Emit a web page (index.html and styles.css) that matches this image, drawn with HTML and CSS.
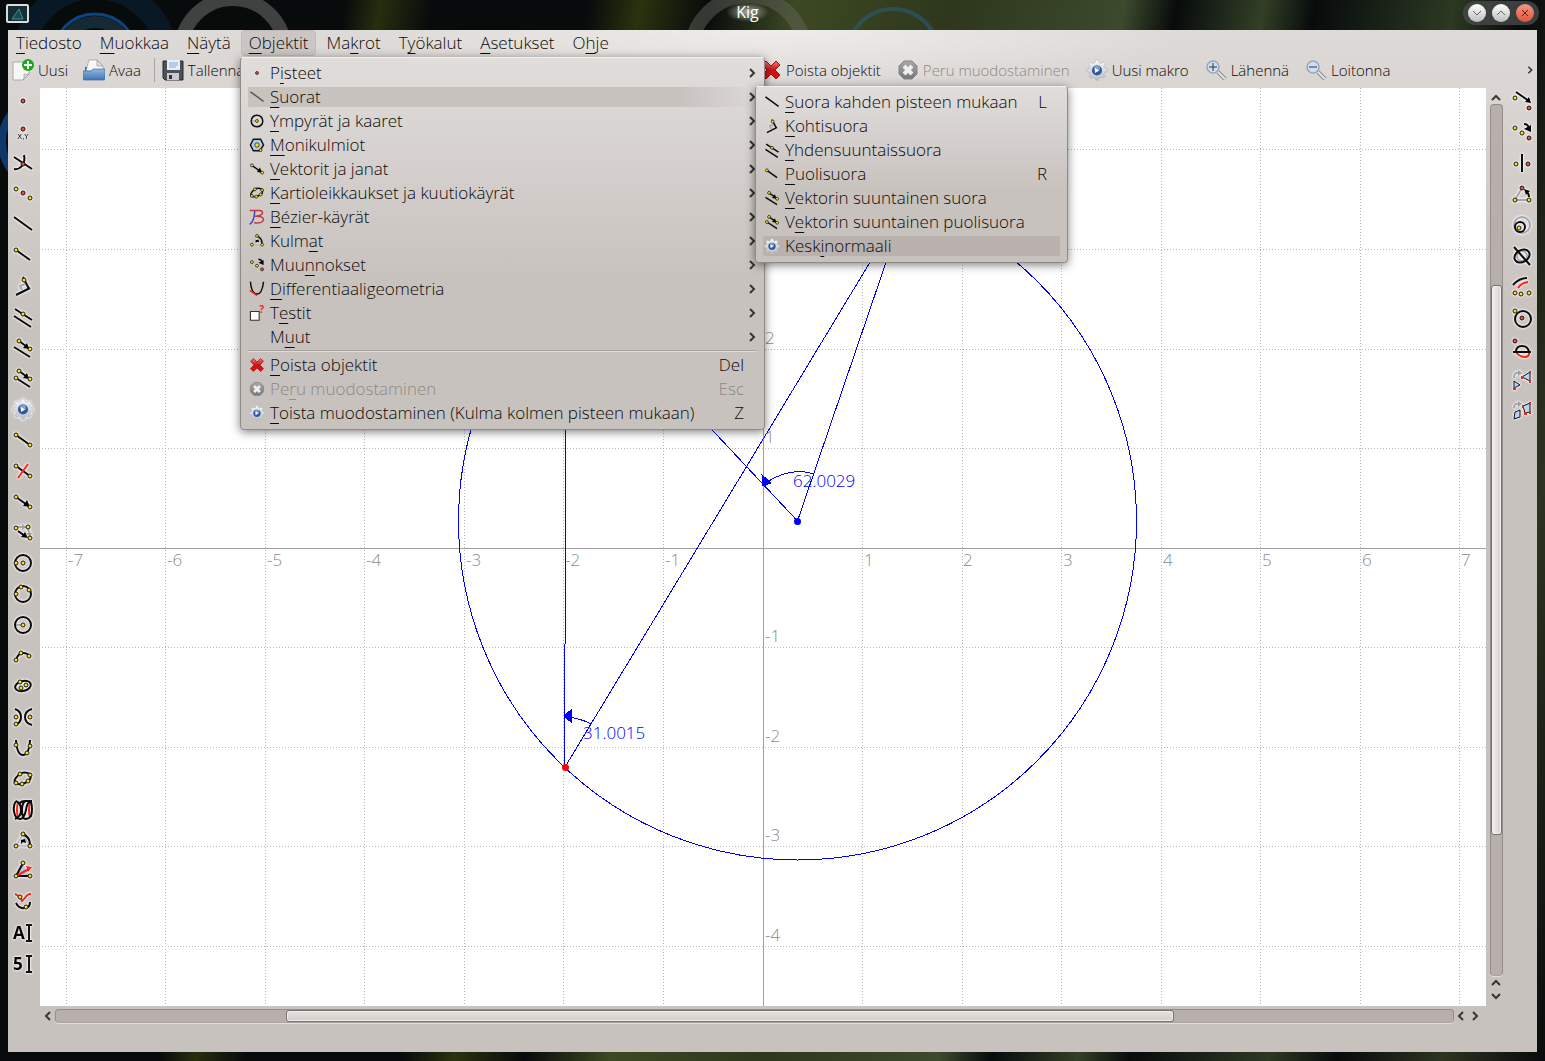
FILE: index.html
```
<!DOCTYPE html>
<html lang="fi">
<head>
    <meta charset="UTF-8">
    <meta name="viewport" content="width=device-width, initial-scale=1.0">
    <title>Kig</title>
    <link rel="stylesheet" href="styles.css">
</head>
<body>
    <!-- Icon library -->
    <svg class="library" width="0" height="0" aria-hidden="true">
        <defs>
            <linearGradient id="steel" x1="0" y1="0" x2="0" y2="1"><stop offset="0" stop-color="#fafafa"/><stop offset="1" stop-color="#b9bcc0"/></linearGradient>
            <linearGradient id="blue" x1="0" y1="0" x2="0" y2="1"><stop offset="0" stop-color="#8fb7e2"/><stop offset="1" stop-color="#3f75b5"/></linearGradient>
            <linearGradient id="grey" x1="0" y1="0" x2="0" y2="1"><stop offset="0" stop-color="#a8a8a8"/><stop offset="1" stop-color="#777"/></linearGradient>
            <linearGradient id="red" x1="0" y1="0" x2="0" y2="1"><stop offset="0" stop-color="#ee7a74"/><stop offset=".5" stop-color="#c81414"/><stop offset="1" stop-color="#e01010"/></linearGradient>
        </defs>
        <symbol id="point" viewBox="0 0 22 22"><circle class="r" cx="11" cy="11" r="2"/></symbol>
        <symbol id="intersection" viewBox="0 0 22 22"><path class="k" d="M2 5 20 17M2 17C8 18 14 12 12 3"/><circle class="r" cx="11" cy="12" r="2"/></symbol>
        <symbol id="midpoint" viewBox="0 0 22 22"><circle class="y" cx="4" cy="7" r="2"/><circle class="r" cx="11" cy="11" r="2"/><circle class="y" cx="18" cy="16" r="2"/></symbol>
        <symbol id="line" viewBox="0 0 22 22"><path class="k" d="M2 4 20 17"/></symbol>
        <symbol id="ray" viewBox="0 0 22 22"><path class="k" d="M4 6 18 16"/><circle class="y" cx="4" cy="6" r="2"/></symbol>
        <symbol id="perpendicular" viewBox="0 0 22 22"><path class="g" d="M10 15 8 11 13 9"/><path class="k" d="M4 20 18 13M11 2 17 14"/><circle class="y" cx="12" cy="5" r="2"/></symbol>
        <symbol id="parallel" viewBox="0 0 22 22"><path class="k" d="M3 3 20 14M2 10 19 21"/><circle class="y" cx="11" cy="8" r="2"/></symbol>
        <symbol id="vector-line" viewBox="0 0 22 22"><path class="k" d="M7 4 18 12M2 10 18 20"/><path d="M11 11 15 6 17 12Z"/><circle class="y" cx="7" cy="4" r="2"/><circle class="y" cx="18" cy="12" r="2"/></symbol>
        <symbol id="vector-ray" viewBox="0 0 22 22"><path class="k" d="M7 4 18 12M4 11 18 20"/><path d="M11 11 15 6 17 12Z"/><circle class="y" cx="7" cy="4" r="2"/><circle class="y" cx="18" cy="12" r="2"/><circle class="y" cx="4" cy="11" r="2"/></symbol>
        <symbol id="gear" viewBox="0 0 22 22">
            <path fill="url(#steel)" stroke="#b4b7bb" stroke-width=".6" d="M9.500 1h3l.6 2.600 1.900.8L17.300 3l2 2.100-1.400 2.200.8 1.900 2.600.6v3l-2.600.6-.8 1.900 1.400 2.200-2 2.100-2.300-1.400-1.900.8-.6 2.300h-3l-.6-2.300-1.900-.8L4.700 19.600l-2-2.100 1.400-2.200-.8-1.900L.7 12.800v-3l2.600-.6.8-1.900L2.700 5.100 4.700 3 7 4.400l1.900-.8Z"/>
            <circle cx="11" cy="11.500" r="6" fill="#c9d5e6"/><circle cx="11" cy="11.500" r="5" fill="#31599a"/><circle cx="11" cy="9.500" r="3" fill="#7f9fcb"/><path fill="#fff" d="M9 9 13 11.500 9 14Z"/>
        </symbol>
        <symbol id="segment" viewBox="0 0 22 22"><path class="k" d="M4 6 18 16"/><circle class="y" cx="4" cy="6" r="2"/><circle class="y" cx="18" cy="16" r="2"/></symbol>
        <symbol id="bisector" viewBox="0 0 22 22"><path class="k" d="M4 6 18 16"/><path class="e" d="M6 18 16 4"/><circle class="y" cx="4" cy="6" r="2"/><circle class="y" cx="18" cy="16" r="2"/></symbol>
        <symbol id="vector" viewBox="0 0 22 22"><path class="k" d="M4 6 18 16"/><path d="M11 15 15 9 18 16Z"/><circle class="y" cx="4" cy="6" r="2"/><circle class="y" cx="18" cy="16" r="2"/></symbol>
        <symbol id="vector-sum" viewBox="0 0 22 22"><path class="g" d="M5 6H14M16 7 18 15"/><path fill="#9a9fa8" d="M10 3 14 6 10 9ZM14 12H20L18 16Z"/><path class="k" d="M6 10 13 15"/><path d="M9 16 13 11 16 17Z"/><circle class="y" cx="4" cy="7" r="2"/><circle class="y" cx="16" cy="6" r="2"/><circle class="y" cx="18" cy="17" r="2"/></symbol>
        <symbol id="circle-through" viewBox="0 0 22 22"><circle class="k" cx="11" cy="11" r="8"/><circle class="y" cx="11" cy="11" r="2"/><circle class="y" cx="4" cy="11" r="2"/></symbol>
        <symbol id="circle-three" viewBox="0 0 22 22"><circle class="k" cx="11" cy="11" r="8"/><circle class="y" cx="4" cy="11" r="2"/><circle class="y" cx="9" cy="4" r="2"/><circle class="y" cx="17" cy="7" r="2"/></symbol>
        <symbol id="circle-radius" viewBox="0 0 22 22"><circle class="k" cx="11" cy="11" r="8"/><path class="g" d="M4 11H9"/><circle class="y" cx="11" cy="11" r="2"/></symbol>
        <symbol id="arc" viewBox="0 0 22 22"><path class="k" d="M4 15Q6 8 11 8 16 8 18 12"/><circle class="y" cx="4" cy="15" r="2"/><circle class="y" cx="9" cy="8" r="2"/><circle class="y" cx="17" cy="11" r="2"/></symbol>
        <symbol id="ellipse" viewBox="0 0 22 22"><ellipse class="k" cx="11" cy="11" rx="8" ry="5" transform="rotate(-15 11 11)"/><circle class="y" cx="8" cy="7" r="2"/><circle class="y" cx="14" cy="10" r="2"/><circle class="y" cx="9" cy="13" r="2"/></symbol>
        <symbol id="hyperbola" viewBox="0 0 22 22"><path class="k" d="M3 3Q9 5 9 11 9 17 3 19M20 3Q13 5 13 11 13 17 20 19"/><circle class="y" cx="4" cy="11" r="2"/><circle class="y" cx="18" cy="11" r="2"/><circle class="y" cx="4" cy="18" r="2"/></symbol>
        <symbol id="parabola" viewBox="0 0 22 22"><path class="k" d="M4 3Q5 18 11 18 17 18 18 3"/><circle class="y" cx="4" cy="8" r="2"/><circle class="y" cx="18" cy="9" r="2"/><circle class="y" cx="15" cy="16" r="2"/></symbol>
        <symbol id="cubic" viewBox="0 0 22 22"><path class="k" d="M3 15Q1 11 8 6 12 3 18 6 20 11 16 13 12 16 10 16 6 17 3 15Z"/><circle class="y" cx="8" cy="6" r="2"/><circle class="y" cx="18" cy="7" r="2"/><circle class="y" cx="16" cy="13" r="2"/><circle class="y" cx="10" cy="16" r="2"/><circle class="y" cx="4" cy="15" r="2"/></symbol>
        <symbol id="locus" viewBox="0 0 22 22"><path class="e" stroke-width="3" d="M6 3Q4 11 6 19M18 3Q16 11 18 19"/><path class="k" d="M4 2Q9 4 9 11 9 18 3 20M4 2Q1 6 2 12 3 20 8 20 12 20 14 11 15 3 19 2M7 5Q9 2 13 2H20M13 20Q10 19 10 11 10 3 14 2M19 3Q21 10 19 17 17 20 13 20"/></symbol>
        <symbol id="angle" viewBox="0 0 22 22"><path fill="#d9dce2" stroke="#9fa4ac" d="M4 16 11 4 18 16Z"/><path class="k" d="M11 4Q18 7 18 15"/><path d="M9 10 13 9 14 13 11 12 9 14Z"/><circle class="y" cx="11" cy="4" r="2"/><circle class="y" cx="4" cy="16" r="2"/><circle class="y" cx="18" cy="16" r="2"/></symbol>
        <symbol id="angle-bisector" viewBox="0 0 22 22"><path fill="#b9c8dc" d="M4 16 11 4 18 16Z"/><path class="k" d="M11 3 4 16H18"/><path class="e" d="M4 16 17 9"/><path fill="#ff2318" d="M14 6 20 7 16 12Z"/><circle class="y" cx="11" cy="3" r="2"/><circle class="y" cx="4" cy="16" r="2"/><circle class="y" cx="18" cy="16" r="2"/></symbol>
        <symbol id="conic-arc" viewBox="0 0 22 22"><path class="e" d="M3 3Q8 5 10 10L13 7Q15 3 19 3"/><path class="k" d="M4 12Q7 18 13 17 18 17 18 11"/><circle class="y" cx="8" cy="6" r="2"/><circle class="y" cx="14" cy="16" r="2"/></symbol>

        <symbol id="translate" viewBox="0 0 22 22"><path class="k" d="M5 2 18 11"/><path d="M14 12 18 7 20 13Z"/><circle class="y" cx="4" cy="8" r="2"/><circle class="r" cx="18" cy="18" r="2"/></symbol>
        <symbol id="reflect-point" viewBox="0 0 22 22"><path class="k" d="M13 3Q17 3 18 7"/><path d="M13 8 20 4 20 11Z"/><circle class="y" cx="4" cy="7" r="2"/><circle class="y" cx="11" cy="12" r="2"/><circle class="r" cx="18" cy="17" r="2"/></symbol>
        <symbol id="reflect-line" viewBox="0 0 22 22"><path class="k" d="M11 2V20"/><circle class="y" cx="5" cy="12" r="2"/><circle class="r" cx="17" cy="12" r="2"/></symbol>
        <symbol id="rotate" viewBox="0 0 22 22"><path class="g" d="M11 5 4 17H18"/><path class="k" d="M18 14Q18 11 16 9"/><path d="M13 6 19 8 15 12Z"/><circle class="r" cx="11" cy="5" r="2"/><circle class="y" cx="4" cy="17" r="2"/><circle class="y" cx="18" cy="17" r="2"/></symbol>
        <symbol id="scale" viewBox="0 0 22 22"><circle class="g" cx="11" cy="11" r="8"/><circle class="k" cx="9" cy="13" r="5"/><circle class="y" cx="8" cy="14" r="2"/></symbol>
        <symbol id="stretch" viewBox="0 0 22 22"><circle class="g" cx="11" cy="11" r="5"/><ellipse class="k" cx="11" cy="11" rx="8" ry="6" transform="rotate(-30 11 11)"/><path class="k" d="M3 2 19 20"/></symbol>
        <symbol id="harmonic" viewBox="0 0 22 22"><path class="k" d="M2 9Q8 2 16 2"/><path class="e" d="M7 12Q10 7 17 6"/><circle class="y" cx="4" cy="17" r="2"/><circle class="y" cx="10" cy="18" r="2"/><circle class="y" cx="18" cy="17" r="2"/></symbol>
        <symbol id="inversion" viewBox="0 0 22 22"><circle class="k" cx="12" cy="12" r="8"/><circle class="y" cx="4" cy="4" r="2"/><circle class="r" cx="11" cy="11" r="2"/></symbol>
        <symbol id="shadow" viewBox="0 0 22 22"><path class="e" d="M5 14Q8 19 15 19 19 18 18 13"/><path class="k" d="M5 14Q5 8 11 8 17 8 18 14M2 14H20"/><circle class="r" cx="4" cy="3" r="2"/></symbol>
        <symbol id="similar" viewBox="0 0 22 22"><path class="g" d="M3 9Q3 3 8 4"/><path fill="#9a9fa8" d="M7 1 11 4 7 7Z"/><path class="t" d="M3 12V19L9 16ZM11 8 19 3V12Z"/><path class="m" d="M2 18h3v3h-3zM18 2h2v3h-2zM18 11h2v3h-2zM10 7h2v3h-2z"/></symbol>
        <symbol id="projective" viewBox="0 0 22 22"><path class="g" d="M3 8Q3 3 8 4"/><path fill="#9a9fa8" d="M7 1 11 4 7 7Z"/><path class="t" d="M4 12 9 10V17L3 19ZM12 6 19 3V12L14 13Z"/><path class="m" d="M18 2h2v3h-2zM18 11h2v3h-2zM13 12h3v3h-3zM11 5h2v3h-2z"/></symbol>

        <symbol id="polygon" viewBox="0 0 22 22"><path fill="#aec9ea" stroke="#111" stroke-width="2" d="M6 3H16L20 11 15 19H6L2 11Z"/><circle class="y" cx="11" cy="11" r="3"/><circle class="y" cx="16" cy="18" r="2"/></symbol>
        <symbol id="bezier" viewBox="0 0 22 22"><path fill="none" stroke="#3c3cc8" stroke-width="2" d="M1 21Q7 18 8 2"/><path fill="none" stroke="#c83440" stroke-width="2" d="M1 2H15Q20 3 18 7 15 10 8 10 20 9 20 15 18 20 7 19"/></symbol>
        <symbol id="tangent" viewBox="0 0 22 22"><path class="k" d="M2 1Q3 17 11 18 18 18 20 1"/><path class="e" d="M1 13 11 20"/></symbol>
        <symbol id="delete" viewBox="0 0 22 22"><path fill="url(#red)" stroke="#a80c0c" d="M6 2 11 7 16 2 20 6 15 11 20 16 16 20 11 15 6 20 2 16 7 11 2 6Z"/></symbol>
        <symbol id="cancel" viewBox="0 0 22 22"><path fill="url(#grey)" stroke="#858585" d="M7 2H15L20 7V15L15 20H7L2 15V7Z"/><path stroke="#eee" stroke-width="4" d="M7 7 15 15M15 7 7 15"/></symbol>
        <symbol id="new" viewBox="0 0 22 22"><path fill="#f7f7f5" stroke="#aaa" d="M1 3H17V15L11 21H1Z"/><path fill="#ddd" stroke="#999" stroke-width=".7" d="M11 21Q13 18 12 15 15 16 17 15Z"/><circle cx="16" cy="6" r="6" fill="#1ca81c"/><path stroke="#fff" stroke-width="2" d="M16 2V10M12 6H20"/></symbol>
        <symbol id="open" viewBox="0 0 22 22"><path fill="#2f64a4" d="M2 8H20V13H2Z"/><path fill="#f8f8f8" stroke="#999" stroke-width=".7" d="M3 12 6 1H14L20 7V12Z"/><path fill="#ddd" stroke="#888" stroke-width=".6" d="M14 1V7H20Z"/><path fill="url(#blue)" stroke="#3a6dac" stroke-width=".7" d="M0 12H8L10 10H22V20Q22 21 21 21H1Q0 21 0 20Z"/></symbol>
        <symbol id="save" viewBox="0 0 22 22"><path fill="#4d5056" stroke="#292b2f" d="M1 2H21V21H3L1 19Z"/><path fill="#e7effa" d="M5 1H18V11H5Z"/><path stroke="#83a9d8" d="M7 4H16M7 6H16M7 8H14"/><path fill="#c8cacd" d="M5 14H17V21H5Z"/><path fill="#2f3236" d="M7 16H10V20H7Z"/></symbol>
        <symbol id="zoom-in" viewBox="0 0 22 22"><path stroke="#8c8f93" stroke-width="4" d="M13 13 20 20"/><path stroke="#e3e3e3" stroke-width="2" d="M13 13 20 20"/><circle cx="8" cy="8" r="6" fill="#cddff5" stroke="#96a6ba" stroke-width="1.500"/><path stroke="#333" d="M8 4V12M4 8H12"/></symbol>
        <symbol id="zoom-out" viewBox="0 0 22 22"><path stroke="#8c8f93" stroke-width="4" d="M13 13 20 20"/><path stroke="#e3e3e3" stroke-width="2" d="M13 13 20 20"/><circle cx="8" cy="8" r="6" fill="#cddff5" stroke="#96a6ba" stroke-width="1.500"/><path stroke="#333" d="M4 8H12"/></symbol>
        <symbol id="chevron" viewBox="0 0 10 10"><path class="c" d="M3 1 7 5 3 9"/></symbol>
    </svg>

    <!-- Wallpaper rings -->
    <svg class="rings" aria-hidden="true">
        <circle cx="95" cy="60" r="72" stroke="#0a2c4c" stroke-width="22" opacity=".4"/>
        <circle cx="95" cy="56" r="42" stroke="#0f4380" stroke-width="3"/>
        <circle cx="95" cy="56" r="34" stroke="#162a36" stroke-width="12"/>
        <circle cx="233" cy="51" r="52" stroke="#404141" stroke-width="14"/>
        <circle cx="48" cy="142" r="46" stroke="#0d3869" stroke-width="8"/>
        <circle cx="748" cy="53" r="57" stroke="#62645a" stroke-width="14" opacity=".5"/>
        <circle cx="893" cy="55" r="46" stroke="#2d5261" stroke-width="4" opacity=".8"/>
    </svg>

    <div class="window">
        <header class="titlebar">
            <svg class="app-icon" viewBox="0 0 24 20"><rect x="1" y="1" width="21" height="17" rx="1" fill="#123034" stroke="#dcdcdc" stroke-width="2"/><path fill="#1d4a4c" stroke="#4b8a88" d="M6 15 13 5 17 15Z"/></svg>
            <h1>Kig</h1>
            <div class="window-buttons">
                <button aria-label="Pienennä"><svg viewBox="0 0 18 18"><path d="M5 7 9 11 13 7"/></svg></button>
                <button aria-label="Suurenna"><svg viewBox="0 0 18 18"><path d="M5 11 9 7 13 11"/></svg></button>
                <button class="close" aria-label="Sulje"><svg viewBox="0 0 18 18"><path d="M6 6 12 12M12 6 6 12"/></svg></button>
            </div>
        </header>

        <div class="app">
            <nav class="menubar">
                <button><u>T</u>iedosto</button>
                <button><u>M</u>uokkaa</button>
                <button><u>N</u>äytä</button>
                <button class="open"><u>O</u>bjektit</button>
                <button>Ma<u>k</u>rot</button>
                <button>T<u>y</u>ökalut</button>
                <button><u>A</u>setukset</button>
                <button>O<u>h</u>je</button>
            </nav>

            <div class="toolbar">
                <div class="file-tools">
                    <button><svg><use href="#new"/></svg>Uusi</button>
                    <button><svg><use href="#open"/></svg>Avaa</button>
                    <span class="divider"></span>
                    <button><svg><use href="#save"/></svg>Tallenna</button>
                </div>
                <button><svg><use href="#delete"/></svg>Poista objektit</button>
                <button disabled><svg><use href="#cancel"/></svg>Peru muodostaminen</button>
                <button><svg><use href="#gear"/></svg>Uusi makro</button>
                <button><svg><use href="#zoom-in"/></svg>Lähennä</button>
                <button><svg><use href="#zoom-out"/></svg>Loitonna</button>
                <button class="more" aria-label="Lisää"><svg><use href="#chevron"/></svg></button>
            </div>

            <div class="workspace">
                <aside class="tools left">
                    <button aria-label="Piste"><svg><use href="#point"/></svg></button>
                    <button aria-label="Piste koordinaateilla"><svg viewBox="0 0 22 22"><circle class="r" cx="11" cy="8" r="2"/><text class="tiny" x="11" y="18" text-anchor="middle">X,Y</text></svg></button>
                    <button aria-label="Leikkauspiste"><svg><use href="#intersection"/></svg></button>
                    <button aria-label="Keskipiste"><svg><use href="#midpoint"/></svg></button>
                    <button aria-label="Suora"><svg><use href="#line"/></svg></button>
                    <button aria-label="Puolisuora"><svg><use href="#ray"/></svg></button>
                    <button aria-label="Kohtisuora"><svg><use href="#perpendicular"/></svg></button>
                    <button aria-label="Yhdensuuntaissuora"><svg><use href="#parallel"/></svg></button>
                    <button aria-label="Vektorin suuntainen suora"><svg><use href="#vector-line"/></svg></button>
                    <button aria-label="Vektorin suuntainen puolisuora"><svg><use href="#vector-ray"/></svg></button>
                    <button aria-label="Keskinormaali"><svg><use href="#gear"/></svg></button>
                    <button aria-label="Jana"><svg><use href="#segment"/></svg></button>
                    <button aria-label="Janan keskinormaali"><svg><use href="#bisector"/></svg></button>
                    <button aria-label="Vektori"><svg><use href="#vector"/></svg></button>
                    <button aria-label="Vektorisumma"><svg><use href="#vector-sum"/></svg></button>
                    <button aria-label="Ympyrä keskipisteestä"><svg><use href="#circle-through"/></svg></button>
                    <button aria-label="Ympyrä kolmen pisteen kautta"><svg><use href="#circle-three"/></svg></button>
                    <button aria-label="Ympyrä säteellä"><svg><use href="#circle-radius"/></svg></button>
                    <button aria-label="Kaari"><svg><use href="#arc"/></svg></button>
                    <button aria-label="Ellipsi"><svg><use href="#ellipse"/></svg></button>
                    <button aria-label="Hyperbeli"><svg><use href="#hyperbola"/></svg></button>
                    <button aria-label="Paraabeli"><svg><use href="#parabola"/></svg></button>
                    <button aria-label="Kuutiokäyrä"><svg><use href="#cubic"/></svg></button>
                    <button aria-label="Ura"><svg><use href="#locus"/></svg></button>
                    <button aria-label="Kulma"><svg><use href="#angle"/></svg></button>
                    <button aria-label="Kulmanpuolittaja"><svg><use href="#angle-bisector"/></svg></button>
                    <button aria-label="Kartiokaari"><svg><use href="#conic-arc"/></svg></button>
                    <button aria-label="Teksti"><svg viewBox="0 0 22 22"><text class="letter" x="1" y="17">A</text><path class="beam" d="M14 3H20M17 3V19M14 19H20"/></svg></button>
                    <button aria-label="Luku"><svg viewBox="0 0 22 22"><text class="letter" x="1" y="17">5</text><path class="beam" d="M14 3H20M17 3V19M14 19H20"/></svg></button>
                </aside>

                <main class="view">
                    <svg class="canvas" viewBox="40 88 1446 918" preserveAspectRatio="xMidYMid slice">
                        <path class="grid" d="M66.500 88V1006M165.500 88V1006M265.500 88V1006M364.500 88V1006M464.500 88V1006M563.500 88V1006M663.500 88V1006M862.500 88V1006M962.500 88V1006M1061.500 88V1006M1161.500 88V1006M1260.500 88V1006M1360.500 88V1006M1459.500 88V1006"/>
                        <path class="grid" d="M42 149.500H1486M42 249.500H1486M42 349.500H1486M42 448.500H1486M42 647.500H1486M42 747.500H1486M42 846.500H1486M42 946.500H1486"/>
                        <path class="axis" d="M40 548.500H1486M763.500 88V1006"/>
                        <g class="ticks">
                            <text x="68" y="566">-7</text><text x="167" y="566">-6</text><text x="267" y="566">-5</text><text x="366" y="566">-4</text><text x="466" y="566">-3</text><text x="565" y="566">-2</text><text x="665" y="566">-1</text>
                            <text x="864" y="566">1</text><text x="963" y="566">2</text><text x="1063" y="566">3</text><text x="1163" y="566">4</text><text x="1262" y="566">5</text><text x="1362" y="566">6</text><text x="1461" y="566">7</text>
                            <text x="765" y="344">2</text><text x="765" y="443">1</text><text x="765" y="642">-1</text><text x="765" y="742">-2</text><text x="765" y="841">-3</text><text x="765" y="941">-4</text>
                        </g>
                        <g class="figure">
                            <circle cx="797.500" cy="521" r="339"/>
                            <path d="M564.500 767V644M565.500 644V274M565 767 907 201 797.500 521 566 274"/>
                            <path d="M814 474Q790 466 764 484M591 724Q580 718 566 717"/>
                            <path class="fill" d="M762 475 771 483 763 486ZM564 716 571 710V722Z"/>
                        </g>
                        <circle class="fill" cx="797.500" cy="521.500" r="3.500"/>
                        <circle class="picked" cx="565.500" cy="767.500" r="3.500"/>
                        <g class="values"><text x="793" y="487">62.0029</text><text x="583" y="739">31.0015</text></g>
                    </svg>
                    <div class="scroll vertical">
                        <button aria-label="Ylös"><svg viewBox="0 0 10 10"><path class="c" d="M1 7 5 3 9 7"/></svg></button>
                        <div class="track"><div class="thumb"></div></div>
                        <button aria-label="Ylös"><svg viewBox="0 0 10 10"><path class="c" d="M1 7 5 3 9 7"/></svg></button>
                        <button aria-label="Alas"><svg viewBox="0 0 10 10"><path class="c" d="M1 3 5 7 9 3"/></svg></button>
                    </div>
                    <div class="scroll horizontal">
                        <button aria-label="Vasemmalle"><svg viewBox="0 0 10 10"><path class="c" d="M7 1 3 5 7 9"/></svg></button>
                        <div class="track"><div class="thumb"></div></div>
                        <button aria-label="Vasemmalle"><svg viewBox="0 0 10 10"><path class="c" d="M7 1 3 5 7 9"/></svg></button>
                        <button aria-label="Oikealle"><svg viewBox="0 0 10 10"><path class="c" d="M3 1 7 5 3 9"/></svg></button>
                    </div>
                </main>

                <aside class="tools right">
                    <button aria-label="Siirto"><svg><use href="#translate"/></svg></button>
                    <button aria-label="Peilaus pisteen suhteen"><svg><use href="#reflect-point"/></svg></button>
                    <button aria-label="Peilaus suoran suhteen"><svg><use href="#reflect-line"/></svg></button>
                    <button aria-label="Kierto"><svg><use href="#rotate"/></svg></button>
                    <button aria-label="Skaalaus"><svg><use href="#scale"/></svg></button>
                    <button aria-label="Venytys"><svg><use href="#stretch"/></svg></button>
                    <button aria-label="Harmoninen homologia"><svg><use href="#harmonic"/></svg></button>
                    <button aria-label="Inversio"><svg><use href="#inversion"/></svg></button>
                    <button aria-label="Varjo"><svg><use href="#shadow"/></svg></button>
                    <button aria-label="Yhdenmuotoisuus"><svg><use href="#similar"/></svg></button>
                    <button aria-label="Projektio"><svg><use href="#projective"/></svg></button>
                </aside>
            </div>
        </div>
    </div>

    <div class="menu objects">
        <button><svg><use href="#point"/></svg><span>P<u>i</u>steet</span><svg class="arrow"><use href="#chevron"/></svg></button>
        <button class="open"><svg class="faint"><use href="#line"/></svg><span><u>S</u>uorat</span><svg class="arrow"><use href="#chevron"/></svg></button>
        <button><svg><use href="#circle-radius"/></svg><span><u>Y</u>mpyrät ja kaaret</span><svg class="arrow"><use href="#chevron"/></svg></button>
        <button><svg><use href="#polygon"/></svg><span><u>M</u>onikulmiot</span><svg class="arrow"><use href="#chevron"/></svg></button>
        <button><svg><use href="#vector"/></svg><span><u>V</u>ektorit ja janat</span><svg class="arrow"><use href="#chevron"/></svg></button>
        <button><svg><use href="#cubic"/></svg><span><u>K</u>artioleikkaukset ja kuutiokäyrät</span><svg class="arrow"><use href="#chevron"/></svg></button>
        <button><svg><use href="#bezier"/></svg><span><u>B</u>ézier-käyrät</span><svg class="arrow"><use href="#chevron"/></svg></button>
        <button><svg><use href="#angle"/></svg><span>Kulm<u>a</u>t</span><svg class="arrow"><use href="#chevron"/></svg></button>
        <button><svg><use href="#reflect-point"/></svg><span>Muu<u>n</u>nokset</span><svg class="arrow"><use href="#chevron"/></svg></button>
        <button><svg><use href="#tangent"/></svg><span><u>D</u>ifferentiaaligeometria</span><svg class="arrow"><use href="#chevron"/></svg></button>
        <button><svg viewBox="0 0 22 22"><path fill="#fff" stroke="#333" stroke-width="1.500" d="M2 9H14V21H2Z"/><text class="query" x="14" y="11">?</text></svg><span>T<u>e</u>stit</span><svg class="arrow"><use href="#chevron"/></svg></button>
        <button><svg></svg><span>M<u>u</u>ut</span><svg class="arrow"><use href="#chevron"/></svg></button>
        <hr>
        <button><svg><use href="#delete"/></svg><span><u>P</u>oista objektit</span><kbd>Del</kbd></button>
        <button disabled><svg><use href="#cancel"/></svg><span>Pe<u>r</u>u muodostaminen</span><kbd>Esc</kbd></button>
        <button><svg><use href="#gear"/></svg><span><u>T</u>oista muodostaminen (Kulma kolmen pisteen mukaan)</span><kbd>Z</kbd></button>
    </div>

    <div class="menu lines">
        <button><svg><use href="#line"/></svg><span><u>S</u>uora kahden pisteen mukaan</span><kbd>L</kbd></button>
        <button><svg><use href="#perpendicular"/></svg><span><u>K</u>ohtisuora</span></button>
        <button><svg><use href="#parallel"/></svg><span><u>Y</u>hdensuuntaissuora</span></button>
        <button><svg><use href="#ray"/></svg><span><u>P</u>uolisuora</span><kbd>R</kbd></button>
        <button><svg><use href="#vector-line"/></svg><span><u>V</u>ektorin suuntainen suora</span></button>
        <button><svg><use href="#vector-ray"/></svg><span>V<u>e</u>ktorin suuntainen puolisuora</span></button>
        <button class="selected"><svg><use href="#gear"/></svg><span>Kesk<u>i</u>normaali</span></button>
    </div>
</body>
</html>
```
FILE: styles.css
```
* {
    box-sizing: border-box;
}

body {
    margin: 0;
    height: 100vh;
    overflow: hidden;
    position: relative;
    font-family: "Open Sans", "Noto Sans", sans-serif;
    font-weight: 300;
    font-size: 16px;
    color: #0c0a0a;
    background:
        linear-gradient(100deg, transparent 20%, rgba(60, 70, 16, 0.6) 22%, transparent 25%, transparent 34%, rgba(56, 68, 16, 0.7) 37%, transparent 41%, rgba(74, 88, 40, 0.8) 46%, rgba(50, 60, 30, 0.9) 55%, rgba(66, 80, 48, 0.9) 65%, transparent 68%, rgba(62, 76, 44, 0.8) 73%, transparent 76%, rgba(54, 68, 40, 0.8) 84%, transparent 88%, rgba(60, 70, 40, 0.7) 94%, transparent),
        #070b0c;
}

button {
    font: inherit;
    color: inherit;
    border: none;
    background: none;
    padding: 0;
    white-space: nowrap;
}

button:disabled {
    color: #8e8986;
}

svg {
    display: block;
    flex: none;
}

u {
    text-underline-offset: 4px;
    text-decoration-thickness: 1px;
    text-decoration-skip-ink: none;
}

.library {
    position: absolute;
}

.rings {
    position: absolute;
    width: 100%;
    height: 100%;
    fill: none;
}

/* icon strokes */
.k { fill: none; stroke: #0a0a0a; stroke-width: 2; }
.g { fill: none; stroke: #a3a8b0; stroke-width: 2; }
.e { fill: none; stroke: #ff2318; stroke-width: 2; }
.c { fill: none; stroke: #393634; stroke-width: 2; }
.y { fill: #ffe11f; stroke: #151515; stroke-width: 1; }
.r { fill: #f0503c; stroke: #151515; stroke-width: 1; }
.t { fill: #b9d3f0; stroke: #111; stroke-width: 1; }
.m { fill: #c8322c; }
.tiny { font: 7px "DejaVu Sans", sans-serif; }
.letter { font: bold 17px "Open Sans", sans-serif; }
.beam { fill: none; stroke: #111; stroke-width: 2; }
.query { font: bold 14px "Open Sans", sans-serif; fill: #f02818; }

/* window */
.window {
    position: relative;
    height: 100%;
    display: flex;
    flex-direction: column;
    padding: 0 8px 9px;
}

.titlebar {
    height: 30px;
    flex: none;
    display: grid;
    grid-template-columns: 1fr auto 1fr;
    align-items: start;
}

.app-icon {
    width: 24px;
    height: 20px;
    margin: 4px 0 0 -2px;
}

h1 {
    margin: 2px 50px 0 0;
    padding: 0 10px;
    font-size: 16px;
    line-height: 20px;
    font-weight: 400;
    color: #fff;
    border-radius: 10px;
    background: radial-gradient(closest-side, rgba(255, 255, 255, 0.6), transparent);
}

.window-buttons {
    justify-self: end;
    display: flex;
    gap: 6px;
    padding: 3px 5px;
    margin: 1px -2px 0 0;
    border-radius: 12px;
    background: rgba(70, 74, 74, 0.8);
}

.window-buttons button {
    width: 18px;
    height: 18px;
    border-radius: 9px;
    background: linear-gradient(#fff, #bdbdbd);
}

.window-buttons path {
    fill: none;
    stroke: #666;
    stroke-width: 1;
}

.window-buttons .close {
    background: linear-gradient(#f09a84, #e0543a);
}

.window-buttons .close path {
    stroke: #7a1408;
}

.app {
    flex: 1;
    min-height: 0;
    display: flex;
    flex-direction: column;
    background:
        radial-gradient(420px 60px at 50% 0, rgba(255, 255, 255, 0.5), transparent),
        linear-gradient(#dedad7, #c8c2be 300px);
}

.menubar {
    height: 26px;
    display: flex;
    gap: 2px;
    font-size: 17px;
}

.menubar button {
    padding: 0 8px;
    line-height: 24px;
}

.menubar .open {
    border: 1px solid #c2bcb9;
    border-radius: 4px;
    padding: 0 7px;
    background: #cbc6c3;
}

.toolbar {
    height: 32px;
    display: flex;
    align-items: center;
    gap: 16px;
    padding: 0 3px 4px 4px;
    font-size: 15px;
}

.toolbar button {
    display: flex;
    align-items: center;
    gap: 4px;
}

.toolbar svg {
    width: 22px;
    height: 22px;
}

.file-tools {
    flex: 0 0 732px;
    display: flex;
    align-items: center;
    gap: 15px;
    overflow: hidden;
}

.divider {
    width: 1px;
    height: 24px;
    margin: 0 -8px 0 -2px;
    background: #aaa4a1;
}

.toolbar .more {
    margin-left: auto;
}

.toolbar .more svg {
    width: 8px;
    height: 8px;
}

.workspace {
    flex: 1;
    min-height: 0;
    display: flex;
}

.tools {
    display: flex;
    flex-direction: column;
    align-items: center;
}

.tools svg {
    width: 22px;
    height: 22px;
    margin: 1px;
    filter: drop-shadow(0 0 1px #fff) drop-shadow(0 0 1px rgba(255, 255, 255, 0.6));
}

.left {
    width: 32px;
    padding: 1px 2px 76px 0;
    justify-content: space-between;
}

.right {
    width: 31px;
    padding-top: 1px;
    gap: 7px;
}

.view {
    flex: 1;
    min-width: 0;
    display: grid;
    grid-template-columns: 1fr 20px;
    grid-template-rows: 1fr 20px;
    padding-bottom: 26px;
}

.canvas {
    width: 100%;
    height: 100%;
    min-height: 0;
    background: #fff;
}

.grid {
    stroke: #b8b8ba;
    stroke-dasharray: 1 2;
    shape-rendering: crispEdges;
}

.axis {
    stroke: #a0a0a4;
    shape-rendering: crispEdges;
}

.ticks {
    fill: #8c8c90;
    font-size: 17px;
}

.figure {
    fill: none;
    stroke: #0000f0;
    shape-rendering: crispEdges;
}

.fill {
    fill: #00f;
}

.picked {
    fill: #f00;
}

.values {
    fill: #00f;
    font-size: 17px;
}

.scroll {
    display: flex;
    align-items: center;
}

.scroll svg {
    width: 10px;
    height: 10px;
}

.vertical {
    flex-direction: column;
    padding: 3px 0 4px;
}

.vertical button {
    height: 13px;
}

.track {
    flex: 1;
    display: grid;
    border: 1px solid #948d89;
    border-bottom-color: #aaa3a0;
    border-radius: 4px;
    background: #b7afac;
    box-shadow: 0 1px 0 #e2dedb;
}

.vertical .track {
    width: 13px;
    grid-template-rows: 180fr 552fr 140fr;
}

.thumb {
    grid-area: 2 / 1;
    border: 1px solid #77716d;
    border-radius: 3px;
    background: linear-gradient(90deg, #f2f0ef, #d5d1ce);
    box-shadow: inset 0 0 0 1px #f3f1f0;
}

.horizontal {
    padding: 0 4px 0 1px;
}

.horizontal button {
    width: 14px;
    display: flex;
    justify-content: center;
}

.horizontal .track {
    height: 14px;
    grid-template-columns: 231fr 890fr 280fr;
}

.horizontal .thumb {
    grid-area: 1 / 2;
    background: linear-gradient(#e6e3e1, #d2cdca);
}

/* menus */
.menu {
    position: absolute;
    display: flex;
    flex-direction: column;
    padding: 3px 7px 4px;
    border: 1px solid #918b88;
    border-top-color: #f4f2f1;
    border-radius: 4px;
    font-size: 17px;
    background: linear-gradient(#e0dddb, #c8c2be 60%);
    box-shadow: 0 2px 10px rgba(0, 0, 0, 0.5);
}

.objects {
    left: 240px;
    top: 57px;
    width: 525px;
}

.lines {
    left: 755px;
    top: 86px;
    width: 313px;
}

.menu button {
    height: 24px;
    display: flex;
    align-items: center;
    gap: 5px;
    padding: 0 6px 0 1px;
    line-height: 20px;
    text-align: left;
}

.menu svg {
    width: 16px;
    height: 16px;
}

.menu .faint {
    opacity: 0.6;
}

.menu span {
    flex: 1;
}

.menu kbd {
    font: inherit;
    margin-right: 7px;
}

.objects .arrow {
    width: 10px;
    height: 10px;
    margin-right: -6px;
}

.objects .open {
    border-radius: 4px;
    background: linear-gradient(90deg, #c9c3c0 85%, transparent);
    background-size: 100% 20px;
    background-position: 0 2px;
    background-repeat: no-repeat;
}

.menu .selected {
    border-radius: 4px;
    border: solid transparent;
    border-width: 2px 0;
    background: #b9b1ad padding-box;
}

.menu hr {
    height: 2px;
    margin: 1px 0;
    border: none;
    border-top: 1px solid #aaa4a1;
    border-bottom: 1px solid #e0dcda;
}
```
